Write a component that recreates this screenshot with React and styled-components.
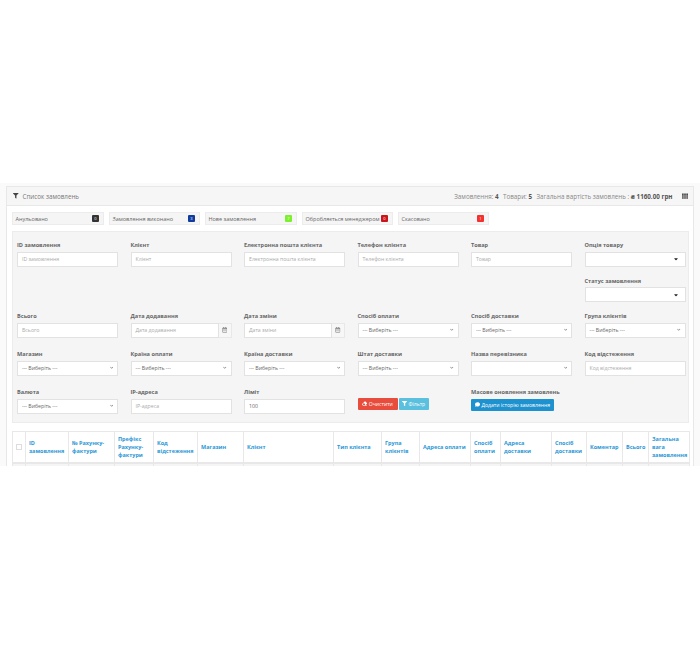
import React from "react";
import styled, { createGlobalStyle } from "styled-components";
import { FaFilter, FaRegCalendarAlt, FaEraser, FaComment, FaCaretDown, FaChevronDown, FaTh } from "react-icons/fa";

const Global = createGlobalStyle`
  html, body { margin: 0; padding: 0; background: #fff; }
  body { font-family: "Open Sans", "Liberation Sans", sans-serif; color: #666; }
  * { box-sizing: border-box; }
`;

const Page = styled.div`
  width: 700px;
  height: 650px;
  padding-top: 183px;
  background: #fff;
`;

const Content = styled.div`
  height: 283px;
  padding: 3px 6px 0;
  background: #fafafa;
  overflow: hidden;
`;

const Panel = styled.div`
  background: #fff;
  border: 1px solid #e8e8e8;
  height: 290px;
`;

const Heading = styled.div`
  height: 19px;
  padding: 0 5px 0 6px;
  display: flex;
  align-items: center;
  justify-content: space-between;
  background: #f6f6f6;
  border-bottom: 1px solid #e8e8e8;
  font-size: 6.25px;
`;

const HeadingTitle = styled.div`
  display: flex;
  align-items: center;
  gap: 4px;
  color: #777;
  svg { color: #444; font-size: 5.5px; }
`;

const HeadingStats = styled.div`
  display: flex;
  align-items: center;
  gap: 4.5px;
  color: #888;
  b { color: #555; }
  svg { color: #444; font-size: 6px; margin-left: 5px; }
`;

const Body = styled.div`
  padding: 6px 5px 0;
`;

const Statuses = styled.div`
  display: flex;
  gap: 5px;
  margin-bottom: 6px;
`;

const Status = styled.div`
  width: ${(p) => p.$w}px;
  height: 13px;
  padding: 0 3px 0 2.5px;
  display: flex;
  align-items: center;
  justify-content: space-between;
  background: #f5f5f5;
  border: 1px solid #ececec;
  font-size: 5.5px;
  color: #666;
  white-space: nowrap;
`;

const Count = styled.span`
  width: 7px;
  height: 7px;
  margin-right: 1px;
  display: flex;
  align-items: center;
  justify-content: center;
  border-radius: 1px;
  background: ${(p) => p.$c};
  color: #fff;
  font-size: 4px;
`;

const Well = styled.div`
  width: 677px;
  height: 192px;
  padding: 9px 4px 0;
  background: #f5f5f5;
  border: 1px solid #ececec;
`;

const Row = styled.div`
  display: grid;
  grid-template-columns: repeat(6, 101px);
  column-gap: 12.5px;
  margin-bottom: ${(p) => p.$mb}px;
`;

const Cell = styled.div`
  display: flex;
  flex-direction: column;
  gap: 10px;
`;

const Field = styled.div`
  min-width: 0;
`;

const Label = styled.div`
  height: 9px;
  margin-bottom: 1.5px;
  line-height: 9px;
  font-size: 5.6px;
  font-weight: 700;
  color: #666;
  white-space: nowrap;
`;

const Input = styled.div`
  height: 15px;
  padding: 0 4px;
  display: flex;
  align-items: center;
  justify-content: space-between;
  background: #fff;
  border: 1px solid #e2e2e2;
  font-size: 5.2px;
  color: ${(p) => (p.$value ? "#666" : "#aaa")};
  svg { color: #555; font-size: 4.5px; }
`;

const DateGroup = styled.div`
  display: flex;
`;

const DateInput = styled(Input)`
  flex: 1;
`;

const DateButton = styled.div`
  width: 13px;
  display: flex;
  align-items: center;
  justify-content: center;
  background: #f7f7f7;
  border: 1px solid #e8e8e8;
  border-left: none;
  color: #777;
  font-size: 5.5px;
`;

const Buttons = styled.div`
  display: flex;
  gap: 1px;
  padding-top: 10px;
`;

const Button = styled.div`
  width: ${(p) => p.$w}px;
  height: 12px;
  display: flex;
  align-items: center;
  justify-content: center;
  gap: 1.5px;
  background: ${(p) => p.$bg};
  border-radius: 1px;
  color: #fff;
  font-size: 5.1px;
  white-space: nowrap;
`;

const Table = styled.table`
  width: 677px;
  margin-top: 8px;
  border-collapse: collapse;
  table-layout: fixed;
`;

const Th = styled.th`
  height: 31px;
  padding: 0 3px;
  border: 1px solid #e8e8e8;
  border-bottom-width: 2px;
  text-align: left;
  font-size: 5.5px;
  line-height: 8px;
  font-weight: 700;
  color: #2a97d6;
`;

const Td = styled.td`
  height: 20px;
  border: 1px solid #e8e8e8;
  background: #f5f5f5;
`;

const Tick = styled.span`
  display: block;
  width: 6px;
  height: 6px;
  margin: 0 auto;
  background: #fff;
  border: 1px solid #ddd;
`;

const Col = styled.col`
  width: ${(p) => p.$w}px;
`;

const statuses = [
  ["Анульовано", "0", "#333", 92],
  ["Замовлення виконано", "3", "#0f3c9e", 91],
  ["Нове замовлення", "7", "#7cf02c", 92],
  ["Обробляється менеджером", "0", "#c9141c", 91],
  ["Скасовано", "1", "#f5302e", 91],
];

const columns = [
  ["", 13], ["ID замовлення", 43], ["№ Рахунку-фактури", 46], ["Префікс Рахунку-фактури", 39],
  ["Код відстеження", 44], ["Магазин", 46], ["Клієнт", 90], ["Тип клієнта", 48],
  ["Група клієнтів", 38], ["Адреса оплати", 51], ["Спосіб оплати", 30], ["Адреса доставки", 51],
  ["Спосіб доставки", 35], ["Коментар", 36], ["Всього", 26], ["Загальна вага замовлення", 41],
];

const TextField = ({ label, value }) => (
  <Field>
    <Label>{label}</Label>
    <Input $value={value}>{value || label}</Input>
  </Field>
);

const DateField = ({ label }) => (
  <Field>
    <Label>{label}</Label>
    <DateGroup>
      <DateInput>{label}</DateInput>
      <DateButton><FaRegCalendarAlt /></DateButton>
    </DateGroup>
  </Field>
);

const SelectField = ({ label, empty }) => (
  <Field>
    <Label>{label}</Label>
    <Input $value>
      <span>{empty ? "" : "--- Виберіть ---"}</span>
      <FaChevronDown style={{ fontSize: 3.5 }} />
    </Input>
  </Field>
);

const CaretField = ({ label }) => (
  <Field>
    <Label>{label}</Label>
    <Input $value>
      <span />
      <FaCaretDown style={{ color: "#222", fontSize: 6, marginRight: 2 }} />
    </Input>
  </Field>
);

export default function App() {
  return (
    <Page>
      <Global />
      <Content>
        <Panel>
          <Heading>
            <HeadingTitle><FaFilter /> Список замовлень</HeadingTitle>
            <HeadingStats>
              <span>Замовлення: <b>4</b></span>
              <span>Товари: <b>5</b></span>
              <span>Загальна вартість замовлень : <b>₴ 1160.00 грн</b></span>
              <FaTh />
            </HeadingStats>
          </Heading>
          <Body>
            <Statuses>
              {statuses.map(([name, n, c, w]) => (
                <Status key={name} $w={w}>
                  {name}
                  <Count $c={c}>{n}</Count>
                </Status>
              ))}
            </Statuses>
            <Well>
              <Row $mb={10}>
                <TextField label="ID замовлення" />
                <TextField label="Клієнт" />
                <TextField label="Електронна пошта клієнта" />
                <TextField label="Телефон клієнта" />
                <TextField label="Товар" />
                <Cell>
                  <CaretField label="Опція товару" />
                  <CaretField label="Статус замовлення" />
                </Cell>
              </Row>
              <Row $mb={12.5}>
                <TextField label="Всього" />
                <DateField label="Дата додавання" />
                <DateField label="Дата зміни" />
                <SelectField label="Спосіб оплати" />
                <SelectField label="Спосіб доставки" />
                <SelectField label="Група клієнтів" />
              </Row>
              <Row $mb={12.5}>
                <SelectField label="Магазин" />
                <SelectField label="Країна оплати" />
                <SelectField label="Країна доставки" />
                <SelectField label="Штат доставки" />
                <SelectField label="Назва перевізника" empty />
                <TextField label="Код відстеження" />
              </Row>
              <Row $mb={0}>
                <SelectField label="Валюта" />
                <TextField label="IP-адреса" />
                <TextField label="Ліміт" value="100" />
                <Buttons>
                  <Button $bg="#e74c3c" $w={40}><FaEraser /> Очистити</Button>
                  <Button $bg="#5bc0de" $w={30}><FaFilter /> Фільтр</Button>
                </Buttons>
                <Field>
                  <Label>Масове оновлення замовлень</Label>
                  <Button $bg="#1e91cf" $w={83}><FaComment /> Додати історію замовлення</Button>
                </Field>
              </Row>
            </Well>
            <Table>
              <colgroup>
                {columns.map(([name, w], i) => <Col key={i} $w={w} />)}
              </colgroup>
              <thead>
                <tr>
                  {columns.map(([name], i) => (
                    <Th key={i}>{i === 0 ? <Tick /> : name}</Th>
                  ))}
                </tr>
              </thead>
              <tbody>
                <tr>{columns.map((c, i) => <Td key={i} />)}</tr>
              </tbody>
            </Table>
          </Body>
        </Panel>
      </Content>
    </Page>
  );
}
